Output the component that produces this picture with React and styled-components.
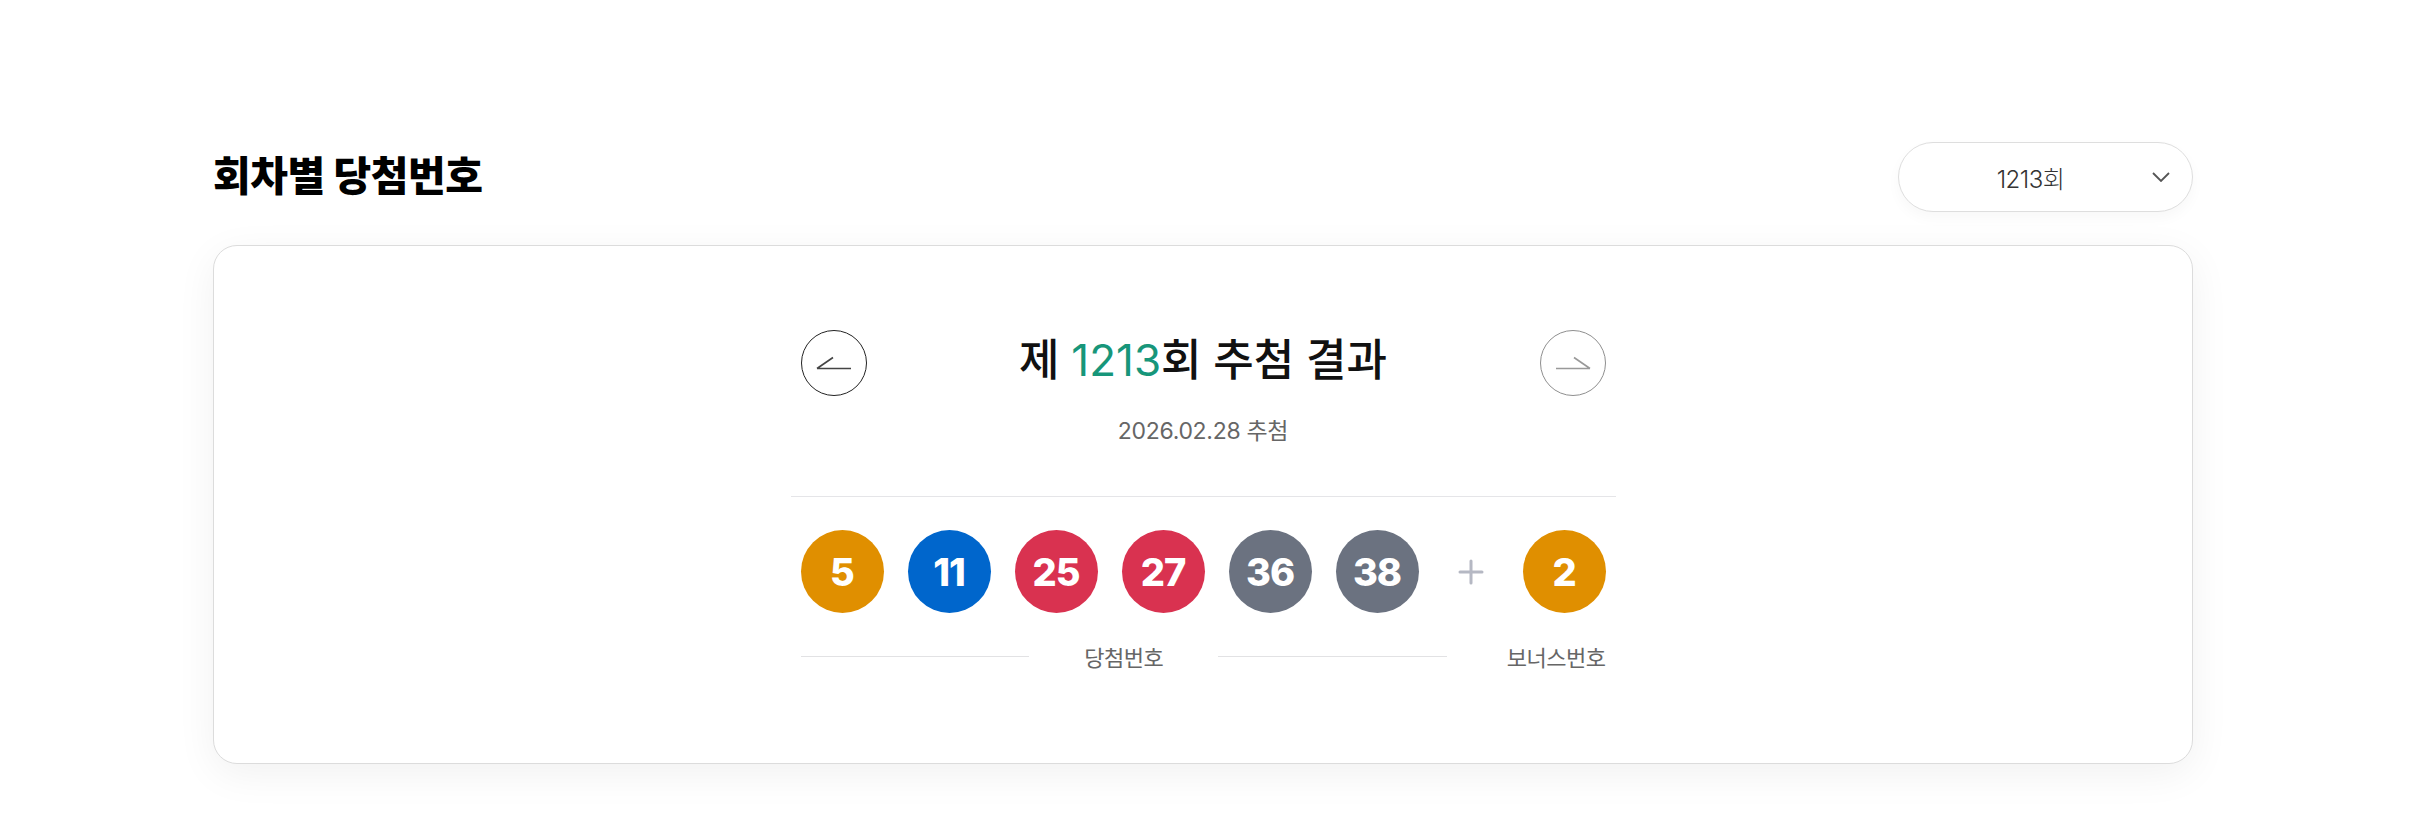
import React from "react";
import styled, { createGlobalStyle } from "styled-components";

const GlobalStyle = createGlobalStyle`
  body {
    margin: 0;
    background: #ffffff;
    font-family: "Inter", "Noto Sans CJK KR", sans-serif;
    color: #111;
  }
`;

const Page = styled.div`
  padding: 142px 222px 60px 213px;
`;

const Header = styled.div`
  display: flex;
  align-items: center;
  justify-content: space-between;
  margin-bottom: 33px;
`;

const Heading = styled.h2`
  margin: 0 0 8px;
  font-family: "Noto Sans CJK KR", sans-serif;
  font-size: 41px;
  font-weight: 900;
  letter-spacing: -0.5px;
  color: #000;
`;

const Select = styled.div`
  width: 295px;
  height: 70px;
  box-sizing: border-box;
  display: flex;
  align-items: center;
  padding-left: 10px;
  border: 1px solid #dedede;
  border-radius: 35px;
  background: #fff;
  box-shadow: 0 6px 14px rgba(0, 0, 0, 0.03);
`;

const SelectText = styled.span`
  flex: 1;
  text-align: center;
  font-size: 24px;
  font-weight: 300;
  color: #333;
  letter-spacing: -0.5px;
`;

const Chevron = styled.svg`
  width: 18px;
  height: 10px;
  margin-right: 22px;
`;

const Card = styled.div`
  border: 1px solid #dcdcdc;
  border-radius: 24px;
  background: #fff;
  box-shadow: 0 10px 40px rgba(0, 0, 0, 0.06);
  padding: 84px 0 94px;
  display: flex;
  justify-content: center;
`;

const Inner = styled.div`
  width: 825px;
  display: flex;
  flex-direction: column;
`;

const NavRow = styled.div`
  display: flex;
  align-items: center;
  justify-content: space-between;
  padding: 0 10px;
  height: 66px;
`;

const NavButton = styled.button`
  width: 66px;
  height: 66px;
  border-radius: 50%;
  border: 1px solid ${({ $muted }) => ($muted ? "#8f8f8f" : "#222")};
  background: #fff;
  display: flex;
  align-items: center;
  justify-content: center;
  padding: 0;
  cursor: pointer;
  svg {
    stroke: ${({ $muted }) => ($muted ? "#999" : "#444")};
  }
`;

const DrawTitle = styled.h3`
  margin: 0 0 12px;
  font-size: 44px;
  font-weight: 500;
  color: #111;
  letter-spacing: 0;
`;

const Round = styled.span`
  color: #17967a;
  font-weight: 400;
`;

const DrawDate = styled.p`
  margin: 20px 0 0;
  text-align: center;
  font-size: 23px;
  line-height: 30px;
  color: #666;
  letter-spacing: -0.3px;
`;

const Divider = styled.hr`
  margin: 50px 0 0;
  border: none;
  border-top: 1px solid #e5e5e8;
`;

const BallRow = styled.div`
  display: flex;
  align-items: center;
  padding: 0 10px;
  margin-top: 33px;
`;

const BallGroup = styled.div`
  display: flex;
  gap: 24px;
`;

const Ball = styled.div`
  width: 83px;
  height: 83px;
  border-radius: 50%;
  background: ${({ $color }) => $color};
  color: #fff;
  display: flex;
  align-items: center;
  justify-content: center;
  font-size: 38px;
  font-weight: 800;
  letter-spacing: -1px;
`;

const Plus = styled.div`
  width: 104px;
  display: flex;
  justify-content: center;
`;

const LabelRow = styled.div`
  display: flex;
  align-items: center;
  gap: 60px;
  padding: 0 10px;
  margin-top: 30px;
`;

const MainLabel = styled.div`
  flex: 1;
  display: flex;
  align-items: center;
  gap: 55px;
`;

const Line = styled.span`
  flex: 1;
  height: 1px;
  background: #e2e2e4;
`;

const Label = styled.span`
  font-family: "Noto Sans CJK KR", sans-serif;
  font-size: 22px;
  line-height: 26px;
  color: #666;
  letter-spacing: -0.5px;
`;

const ballColor = (n) => {
  if (n <= 10) return "#e08f00";
  if (n <= 20) return "#0066cc";
  if (n <= 30) return "#d93250";
  if (n <= 40) return "#6b7280";
  return "#5aa74b";
};

const numbers = [5, 11, 25, 27, 36, 38];
const bonus = 2;

export default function App() {
  return (
    <>
      <GlobalStyle />
      <Page>
        <Header>
          <Heading>회차별 당첨번호</Heading>
          <Select>
            <SelectText>1213회</SelectText>
            <Chevron viewBox="0 0 18 10" fill="none" stroke="#555" strokeWidth="1.8">
              <path d="M1 1 L9 9 L17 1" />
            </Chevron>
          </Select>
        </Header>
        <Card>
          <Inner>
            <NavRow>
              <NavButton aria-label="이전 회차">
                <svg width="36" height="14" viewBox="0 0 36 14" fill="none" strokeWidth="1.6">
                  <path d="M1 12.5 H35 M1 12.5 L17 1.5" />
                </svg>
              </NavButton>
              <DrawTitle>
                제 <Round>1213</Round>회 추첨 결과
              </DrawTitle>
              <NavButton $muted aria-label="다음 회차">
                <svg width="36" height="14" viewBox="0 0 36 14" fill="none" strokeWidth="1.6">
                  <path d="M1 12.5 H35 M35 12.5 L19 1.5" />
                </svg>
              </NavButton>
            </NavRow>
            <DrawDate>2026.02.28 추첨</DrawDate>
            <Divider />
            <BallRow>
              <BallGroup>
                {numbers.map((n) => (
                  <Ball key={n} $color={ballColor(n)}>
                    {n}
                  </Ball>
                ))}
              </BallGroup>
              <Plus>
                <svg width="26" height="26" viewBox="0 0 26 26" stroke="#b5b8c3" strokeWidth="3" strokeLinecap="round">
                  <path d="M13 2 V24 M2 13 H24" />
                </svg>
              </Plus>
              <Ball $color={ballColor(bonus)}>{bonus}</Ball>
            </BallRow>
            <LabelRow>
              <MainLabel>
                <Line />
                <Label>당첨번호</Label>
                <Line />
              </MainLabel>
              <Label>보너스번호</Label>
            </LabelRow>
          </Inner>
        </Card>
      </Page>
    </>
  );
}
